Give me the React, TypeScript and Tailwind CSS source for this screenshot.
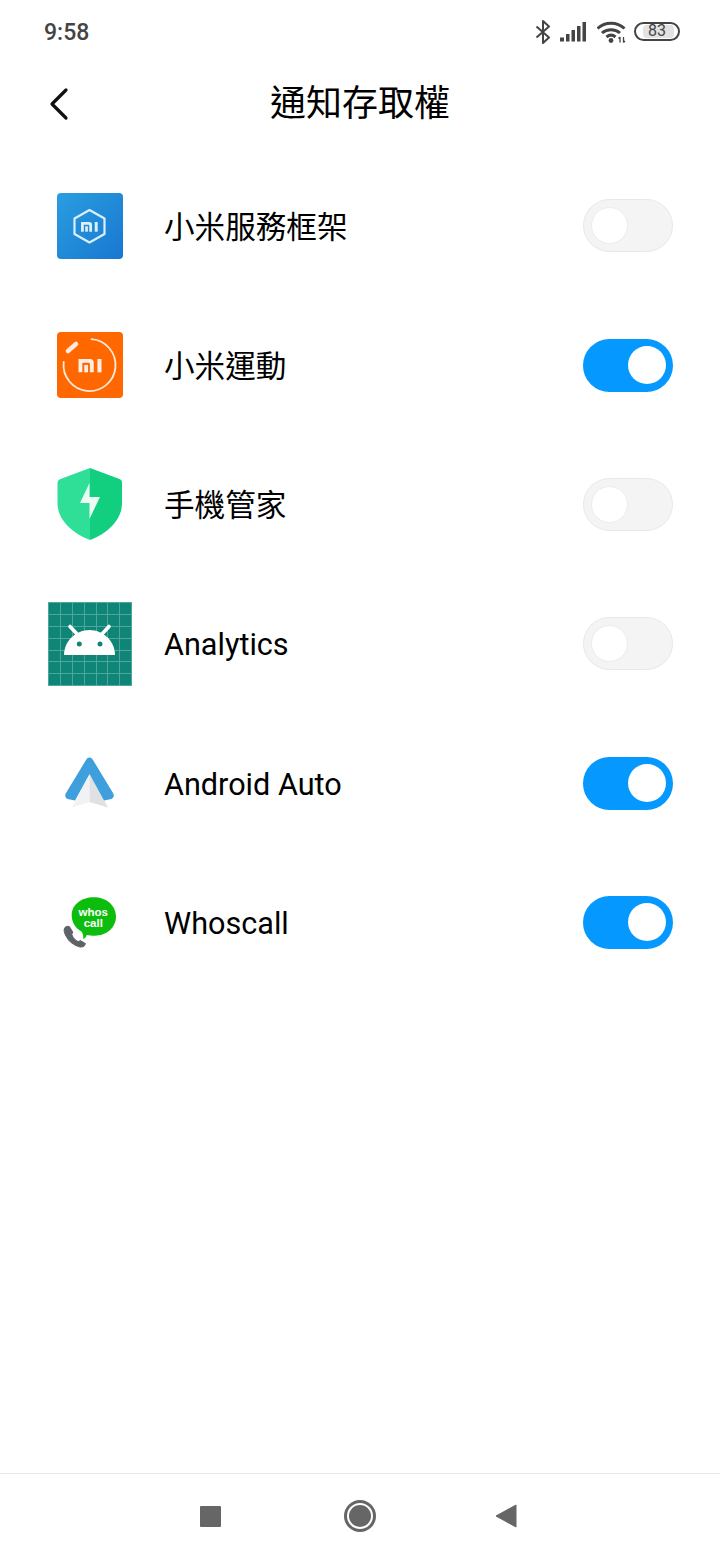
import React from "react";

const FONT = "font-['Roboto','Noto_Sans_CJK_TC',sans-serif]";

function Toggle({ on }: { on: boolean }) {
  return on ? (
    <div className="flex h-[53px] w-[90px] items-center justify-end rounded-full bg-[#0599ff] pr-[7px]">
      <div className="h-[38px] w-[38px] rounded-full bg-white" />
    </div>
  ) : (
    <div className="flex h-[53px] w-[90px] items-center justify-start rounded-full border border-[#e8e8e8] bg-[#f4f4f4] pl-[7px]">
      <div className="h-[37px] w-[37px] rounded-full border border-[#ececec] bg-white" />
    </div>
  );
}

function MiMark({ x, y, s, color = "#fff" }: { x: number; y: number; s: number; color?: string }) {
  return (
    <g transform={`translate(${x} ${y}) scale(${s / 31})`} fill={color}>
      <path d="M0 0H15.500A5 5 0 0 1 20.500 5V18H15.300V6.500A1.300 1.300 0 0 0 14 5.200H5.200V18H0Z" />
      <rect x="7.800" y="8" width="5" height="10" />
      <rect x="25.500" y="0" width="5.500" height="18" />
    </g>
  );
}

function MiServiceIcon() {
  return (
    <svg width="84" height="84" viewBox="0 0 84 84">
      <defs>
        <linearGradient id="ms" x1="0" y1="0" x2="1" y2="1">
          <stop offset="0" stopColor="#2a9ee0" />
          <stop offset="1" stopColor="#1877d0" />
        </linearGradient>
      </defs>
      <rect x="9" y="9" width="66" height="66" rx="4" fill="url(#ms)" />
      <path
        d="M41.500 26 56.500 34.500V50L41.500 58.500 26.500 50V34.500Z"
        fill="none"
        stroke="#d9effb"
        strokeWidth="2.200"
        strokeLinejoin="round"
      />
      <MiMark x={33} y={38} s={16.700} color="#d9effb" />
    </svg>
  );
}

function MiFitIcon() {
  return (
    <svg width="84" height="84" viewBox="0 0 84 84">
      <rect x="9" y="9" width="66" height="66" rx="4" fill="#ff6700" />
      <path
        d="M43.500 16.100A26 26 0 1 1 15.700 39"
        fill="none"
        stroke="#ffe9da"
        strokeWidth="1.800"
        strokeLinecap="round"
      />
      <path d="M20 28 28 21" stroke="#ffe9da" strokeWidth="4.600" strokeLinecap="round" />
      <MiMark x={30.500} y={36} s={23} color="#ffeee3" />
    </svg>
  );
}

function ShieldIcon() {
  return (
    <svg width="84" height="84" viewBox="0 0 84 84">
      <path d="M42 6 71.500 17C73.500 17.800 74 19 74 21V41C74 58 60 71 42 78Z" fill="#12cf80" />
      <path d="M42 6 12.500 17C10.500 17.800 9.500 19 9.500 21V41C9.500 58 24 71 42 78Z" fill="#2fdf98" />
      <path d="M41.500 21 32 41H41.500V57L52 35H41.500Z" fill="#eafcf3" />
    </svg>
  );
}

function AnalyticsIcon() {
  const lines = [12, 24, 36, 48, 59, 71];
  return (
    <svg width="84" height="84" viewBox="0 0 84 84">
      <rect width="84" height="84" fill="#0e8576" />
      <rect x="0.500" y="0.500" width="83" height="83" fill="none" stroke="#4fa69b" />
      {lines.map((v) => (
        <g key={v} stroke="#4fa69b" strokeWidth="1">
          <line x1={v + 0.500} y1="0" x2={v + 0.500} y2="84" />
          <line x1="0" y1={v + 0.500} x2="84" y2={v + 0.500} />
        </g>
      ))}
      <path d="M16 53C16 39 28 28 41.500 28S67 39 67 53Z" fill="#fff" />
      <path d="M29 32 22 24.500M54 32 61 24.500" stroke="#fff" strokeWidth="3.600" strokeLinecap="round" />
      <circle cx="31.300" cy="42" r="2.500" fill="#0e8576" />
      <circle cx="52" cy="42" r="2.500" fill="#0e8576" />
    </svg>
  );
}

function AutoIcon() {
  return (
    <svg width="84" height="84" viewBox="0 0 84 84">
      <path d="M41.500 33 24 66.600 41.500 61Z" fill="#f1f2f3" />
      <path d="M41.500 33 60 66.600 41.500 61Z" fill="#dfe1e3" />
      <path
        d="M41.500 16.500C40 16.500 39 17.300 38 19L18 52C16.500 54.500 17.200 57 19.500 58L27 59.500 41.500 33 56 59.500 63.500 58C65.800 57 66.500 54.500 65 52L45 19C44 17.300 43 16.500 41.500 16.500Z"
        fill="#3f9fdc"
      />
    </svg>
  );
}

function WhoscallIcon() {
  return (
    <svg width="84" height="84" viewBox="0 0 84 84">
      <path
        d="M46 17.200C58 17.200 68 25 68 36.500 68 48 58 55.700 47 55.700 44 55.700 41 55.500 38.700 55 38 57 37 58.500 35.300 59 35.500 56 35 54 33.500 51.500 27 48 23.700 42 23.700 35 23.700 25 33 17.200 46 17.200Z"
        fill="#0dbd0d"
      />
      <text x="45.300" y="35.800" textAnchor="middle" fill="#fff" fontFamily="Liberation Sans, sans-serif" fontWeight="700" fontSize="11.500">
        whos
      </text>
      <text x="45.300" y="46.500" textAnchor="middle" fill="#fff" fontFamily="Liberation Sans, sans-serif" fontWeight="700" fontSize="11.500">
        call
      </text>
      <path
        transform="translate(-1 5.500) scale(1.050)"
        d="M18 39.500C16 41 16 44 17.500 47 20 52 25 57 31.500 58.500 33.500 58.800 35.500 58 36.500 55.500L32 52.500 29.500 53.500C26.500 52 24.500 49.500 23.500 46.500L24.500 44.500 21.500 39.500C20.500 38.800 19 38.800 18 39.500Z"
        fill="#5f6368"
        stroke="#5f6368"
        strokeWidth="1"
        strokeLinejoin="round"
      />
    </svg>
  );
}

const rows: { label: string; on: boolean; icon: React.ReactNode }[] = [
  { label: "小米服務框架", on: false, icon: <MiServiceIcon /> },
  { label: "小米運動", on: true, icon: <MiFitIcon /> },
  { label: "手機管家", on: false, icon: <ShieldIcon /> },
  { label: "Analytics", on: false, icon: <AnalyticsIcon /> },
  { label: "Android Auto", on: true, icon: <AutoIcon /> },
  { label: "Whoscall", on: true, icon: <WhoscallIcon /> },
];

function StatusIcons() {
  return (
    <div className="flex items-center">
      <svg width="18" height="26" viewBox="0 0 18 26" className="mr-[7px]">
        <path
          d="M2.500 7.500 15 18.500 9 24V2L15 7.500 2.500 18.500"
          fill="none"
          stroke="#444"
          strokeWidth="2"
          strokeLinejoin="round"
        />
      </svg>
      <svg width="28" height="22" viewBox="0 0 28 22" className="mr-[10px]">
        <g fill="#444">
          <rect x="1" y="16.500" width="4" height="4" />
          <rect x="7" y="13" width="3.500" height="7.500" />
          <rect x="12.500" y="9" width="3.500" height="11.500" />
          <rect x="18" y="5" width="3.500" height="15.500" />
          <rect x="23.500" y="1" width="3.500" height="19.500" />
        </g>
      </svg>
      <svg width="30" height="24" viewBox="0 0 30 24" className="mr-[7px]">
        <g fill="none" stroke="#444" strokeWidth="3">
          <path d="M0.500 8.500C8 1.500 20 1.500 27.500 8.500" />
          <path d="M5 13C10 8.500 18 8.500 23 13" />
          <path d="M9.500 17C12.500 14.500 15.500 14.500 18.500 17" />
        </g>
        <circle cx="14" cy="20.500" r="2.400" fill="#444" />
        <path d="M23 22.500V17M21.500 18.500 23 17M26.500 17V22.500M26.500 22.500 28 21" stroke="#444" strokeWidth="1.300" fill="none" />
      </svg>
      <div className="relative mb-[2px] flex h-[19px] w-[46px] items-center justify-center overflow-hidden rounded-full border-2 border-[#444]">
        <div className="absolute inset-y-[1px] left-[7px] w-[31px] rounded-[4px] bg-[#e2e2e2]" />
        <span className="relative text-[16px] leading-none text-[#444]">83</span>
      </div>
    </div>
  );
}

export default function App() {
  return (
    <div className={`flex h-[1560px] w-[720px] flex-col bg-white ${FONT}`}>
      <div className="flex h-[64px] items-center justify-between pl-[44px] pr-[40px]">
        <span className="text-[23px] font-medium leading-none text-[#444]">9:58</span>
        <StatusIcons />
      </div>

      <div className="relative flex h-[78px] items-center justify-center">
        <svg width="24" height="36" viewBox="0 0 24 36" className="absolute left-[47px] top-[21px]">
          <path d="M19 5 5 19 19 33" fill="none" stroke="#111" strokeWidth="3.200" strokeLinecap="round" strokeLinejoin="round" />
        </svg>
        <h1 className="pt-[2px] text-[36px] font-normal leading-none text-black">通知存取權</h1>
      </div>

      <div className="flex-1 pt-[14.200px]">
        {rows.map((r) => (
          <div key={r.label} className="flex h-[139.300px] items-center pl-[48px] pr-[47px]">
            <div className="h-[84px] w-[84px] shrink-0">{r.icon}</div>
            <span className="ml-[32px] flex-1 pt-[4px] text-[30.600px] leading-none text-black">{r.label}</span>
            <Toggle on={r.on} />
          </div>
        ))}
      </div>

      <div className="flex h-[87px] items-center border-t border-[#e8e8e8] pb-[2px] pl-[200px]">
        <div className="h-[21px] w-[21px] rounded-[1px] bg-[#666]" />
        <div className="ml-[123px] flex h-[32px] w-[32px] items-center justify-center rounded-full border-[3px] border-[#666]">
          <div className="h-[22px] w-[22px] rounded-full bg-[#666]" />
        </div>
        <svg width="22" height="24" viewBox="0 0 22 24" className="ml-[119px]">
          <path d="M21 1V23L1 12Z" fill="#666" stroke="#666" strokeWidth="1" strokeLinejoin="round" />
        </svg>
      </div>
    </div>
  );
}
